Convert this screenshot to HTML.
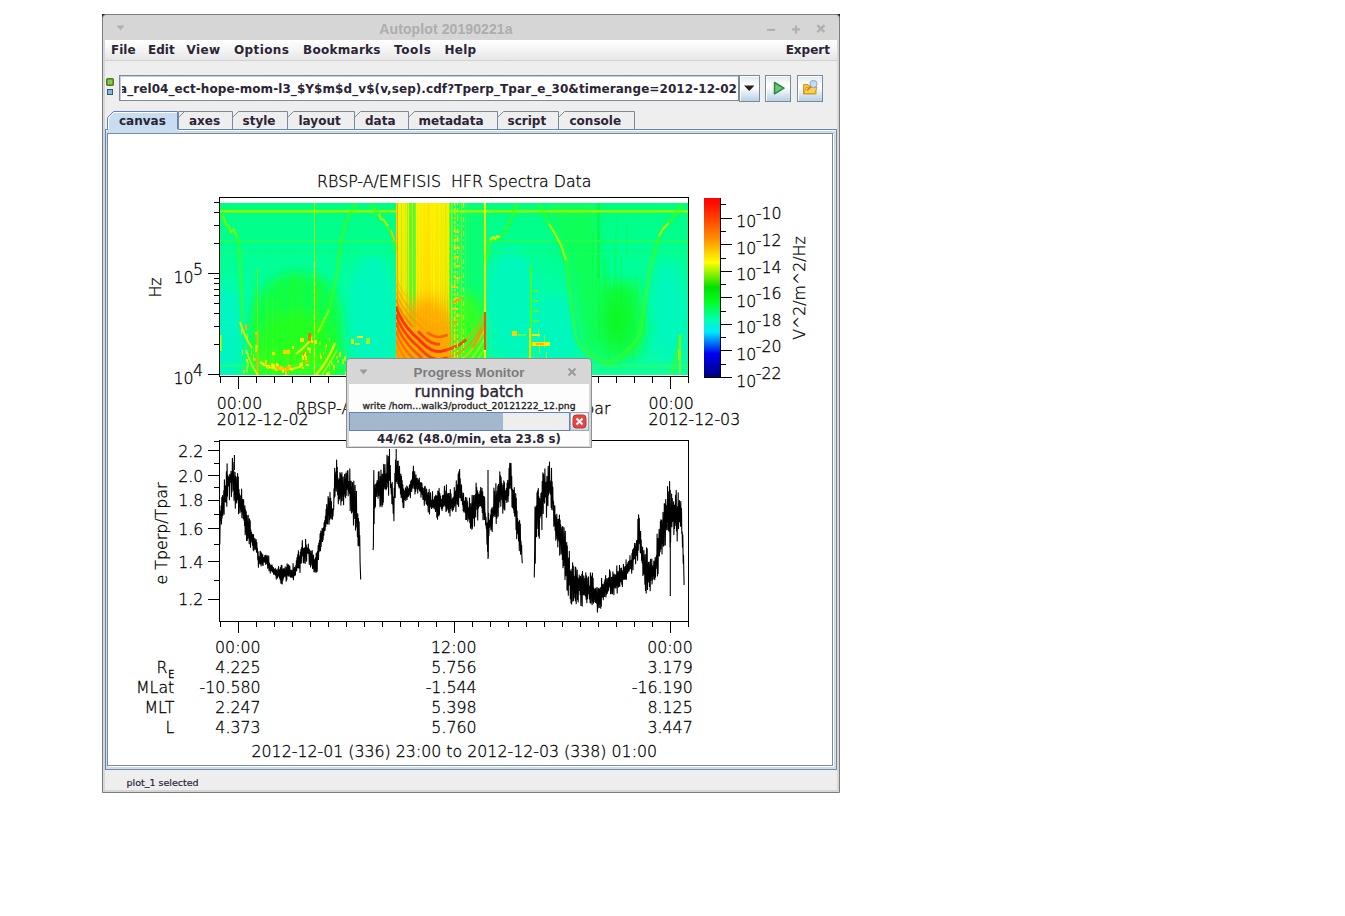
<!DOCTYPE html>
<html><head><meta charset="utf-8"><title>Autoplot 20190221a</title>
<style>
html,body{margin:0;padding:0;background:#fff;}
body{width:1345px;height:916px;position:relative;overflow:hidden;font-family:"DejaVu Sans","Liberation Sans",sans-serif;}
.abs{position:absolute;}
#win{position:absolute;left:102px;top:14px;width:736px;height:777px;border:1px solid #7c7c7c;background:#d6d6d6;border-radius:4px 4px 0 0;}
#title{position:absolute;left:0;top:0;width:736px;height:25px;}
#title .t{position:absolute;left:0;width:736px;top:6px;text-align:center;font:bold 14px "Liberation Sans",sans-serif;color:#b2b2b2;}
#menubar{position:absolute;left:2px;top:25px;width:732px;height:20px;background:linear-gradient(#ffffff 0%,#f4f4f4 50%,#e6e6e6 100%);border-bottom:1px solid #d0d0d0;}
#menubar span{position:absolute;top:3px;font:bold 12px "DejaVu Sans",sans-serif;color:#2b2436;white-space:pre;}
#panel{position:absolute;left:2px;top:46px;width:732px;height:729px;background:#eeeeee;}
.ui{font:bold 12px "DejaVu Sans",sans-serif;color:#333;}
#url{position:absolute;left:14px;top:14px;width:618px;height:24px;border:1px solid #7a8a99;background:#fff;box-shadow:inset 1px 1px 0 #b8cfe5;overflow:hidden;}
#url .clip{position:absolute;left:2px;right:0;top:0;bottom:0;overflow:hidden;}
#url span{position:absolute;right:1px;top:6px;letter-spacing:0.075px;white-space:pre;font:bold 12px "DejaVu Sans",sans-serif;color:#2b2436;}
.btn{position:absolute;top:14px;height:25px;border:1px solid #7a8a99;background:linear-gradient(#dde8f3 0%,#ffffff 35%,#ffffff 45%,#b8cfe5 100%);box-shadow:inset 1px 1px 0 #fff;}
#tabs{position:absolute;left:0;top:0;z-index:2;pointer-events:none;}
#tabs text{font:bold 12px "DejaVu Sans",sans-serif;fill:#2b2436;}
#content{position:absolute;left:105px;top:129px;width:730px;height:639px;border:1px solid #7a8a99;border-top-color:#6382bf;border-left-color:#6382bf;background:#c8ddf2;box-shadow:inset 0 1px 0 #fff;}
#canvas{position:absolute;left:1px;top:3px;width:724px;height:631px;border:1px solid #7a8a99;background:#fff;box-shadow:1px 1px 0 #fff;}
#plot text{stroke:#000;stroke-width:0.3px;}
#status{position:absolute;left:126.5px;top:777px;-webkit-text-stroke:0.2px #2b2436;font:9.5px "DejaVu Sans",sans-serif;color:#2b2436;white-space:pre;}
</style></head><body>
<div class="abs" style="left:102px;top:14px;width:738px;height:4px;background:#0b1d40"></div>
<div id="win">
 <div id="title">
  <svg class="abs" style="left:0;top:0" width="736" height="25">
   <path d="M13.5 10.5h8l-4 5z" fill="#b0b0b0"/>
   <rect x="664" y="13.8" width="8" height="2.2" fill="#b0b0b0"/>
   <path d="M689 14.4h8M693 10.4v8" stroke="#b0b0b0" stroke-width="2.2" fill="none"/>
   <path d="M714.4 10.2l7 7M721.4 10.2l-7 7" stroke="#b0b0b0" stroke-width="2.4" fill="none"/>
  </svg>
  <div class="t" style="left:275px;width:136px;letter-spacing:0.1px;color:#adadad">Autoplot 20190221a</div>
 </div>
 <div id="menubar">
  <span style="left:6px">File</span><span style="left:43px">Edit</span><span style="left:81.5px;letter-spacing:0.4px">View</span><span style="left:129px;letter-spacing:0.39px">Options</span><span style="left:198px;letter-spacing:0.28px">Bookmarks</span><span style="left:289px;letter-spacing:0.64px">Tools</span><span style="left:339.5px;letter-spacing:0.25px">Help</span><span style="right:7px">Expert</span>
 </div>
 <div id="panel">
  <svg class="abs" style="left:0;top:15px" width="14" height="24">
   <rect x="1.75" y="2.75" width="6.5" height="6.5" rx="1" fill="#8fc25a" stroke="#4c7d0c" stroke-width="1.5"/>
   <rect x="2.5" y="13.5" width="5" height="5" fill="#86b8d2" stroke="#2a5d7e" stroke-width="1"/>
  </svg>
  <div id="url"><div class="clip"><span>a_rel04_ect-hope-mom-l3_$Y$m$d_v$(v,sep).cdf?Tperp_Tpar_e_30&amp;timerange=2012-12-02</span></div></div>
  <div class="btn" style="left:634px;width:19px"><svg width="19" height="24"><path d="M4 9.5h10.5l-5.25 5.5z" fill="#222"/></svg></div>
  <div class="btn" style="left:660px;width:24px"><svg width="24" height="24"><path d="M8.5 6.5l9.5 5.7l-9.5 5.7z" fill="#6cc578" stroke="#2c8a3c" stroke-width="1.5" stroke-linejoin="round"/></svg></div>
  <div class="btn" style="left:692px;width:24px"><svg width="24" height="24"><path d="M5.5 8.5h4.5l1 1.5h7v8h-12.5z" fill="#f3c63c" stroke="#c99a22"/><path d="M8 11.5h8.5v5h-8.5z" fill="#fdf0b0"/><path d="M6 17.5l2-6h11l-2.5 6z" fill="#f7d354" stroke="#c99a22" stroke-width="0.8"/><circle cx="15.5" cy="8" r="3.6" fill="#c2dcf4" stroke="#8fa8c8"/><path d="M13 10.5l-4 4" stroke="#e07828" stroke-width="1.7"/></svg></div>
 </div>
</div>
<svg id="tabs" width="1345" height="140">
 <g fill="#eeeeee" stroke="#7a8a99" stroke-width="1">
  <path d="M178.5 129V111.5H232.5V129"/>
  <path d="M232.5 117.5l6-6H287.5V129"/>
  <path d="M287.5 117.5l6-6H354.5V129"/>
  <path d="M354.5 117.5l6-6H408.5V129"/>
  <path d="M408.5 117.5l6-6H497.5V129"/>
  <path d="M497.5 117.5l6-6H558.5V129"/>
  <path d="M558.5 117.5l6-6H634.5V129"/>
 </g>
 <g stroke="#7a8a99" fill="none"><path d="M178.5 117.5l6-6"/></g>
 <path d="M107.5 130V117.5l6-6H177.5V130z" fill="#c8ddf2" stroke="#6382bf"/>
 <path d="M108.5 129V118l5.5-5.5H177" fill="none" stroke="#fff"/>
 <rect x="108" y="129" width="70" height="2" fill="#c8ddf2"/>
 <text x="119" y="125">canvas</text><text x="189" y="125">axes</text><text x="242.5" y="125">style</text><text x="298.5" y="125">layout</text><text x="365" y="125">data</text><text x="418.5" y="125">metadata</text><text x="507.5" y="125">script</text><text x="569.5" y="125">console</text>
</svg>
<div id="content"><div id="canvas">
<svg id="plot" class="abs" style="left:0;top:0" width="724" height="631" viewBox="108 134 724 631">
<defs>
<linearGradient id="bg" x1="0" y1="0" x2="0" y2="1"><stop offset="0" stop-color="#00ff7c"/><stop offset="0.12" stop-color="#00ff8a"/><stop offset="0.3" stop-color="#00ff94"/><stop offset="0.5" stop-color="#00ffa2"/><stop offset="0.8" stop-color="#00fab6"/><stop offset="1" stop-color="#10ff98"/></linearGradient>
<linearGradient id="cb" x1="0" y1="0" x2="0" y2="1"><stop offset="0" stop-color="#ff0000"/><stop offset="0.04" stop-color="#ff1000"/><stop offset="0.22" stop-color="#ff8800"/><stop offset="0.36" stop-color="#ffff00"/><stop offset="0.50" stop-color="#00e000"/><stop offset="0.58" stop-color="#00ff20"/><stop offset="0.68" stop-color="#00ffb0"/><stop offset="0.75" stop-color="#00e8ff"/><stop offset="0.87" stop-color="#0000f0"/><stop offset="1" stop-color="#000080"/></linearGradient>
<linearGradient id="yo" x1="0" y1="0" x2="0" y2="1"><stop offset="0" stop-color="#ffee00"/><stop offset="0.45" stop-color="#ffe000"/><stop offset="0.75" stop-color="#ffc000"/><stop offset="1" stop-color="#ffa000"/></linearGradient>
<linearGradient id="og" x1="0" y1="0" x2="0" y2="1"><stop offset="0" stop-color="#ffb400" stop-opacity="0"/><stop offset="0.5" stop-color="#ffb000" stop-opacity="0.6"/><stop offset="1" stop-color="#ffa000" stop-opacity="0.85"/></linearGradient>
<linearGradient id="yg" x1="0" y1="0" x2="0" y2="1"><stop offset="0" stop-color="#c0ff00"/><stop offset="0.6" stop-color="#e0ff00"/><stop offset="1" stop-color="#ffd000"/></linearGradient>
<filter id="b6" x="-30%" y="-30%" width="160%" height="160%"><feGaussianBlur stdDeviation="6"/></filter>
<filter id="b3" x="-30%" y="-30%" width="160%" height="160%"><feGaussianBlur stdDeviation="3"/></filter>
<filter id="b1" x="-30%" y="-30%" width="160%" height="160%"><feGaussianBlur stdDeviation="0.8"/></filter>
<clipPath id="sp"><rect x="220" y="203" width="468" height="172"/></clipPath>
<clipPath id="blk"><rect x="396" y="203" width="90" height="172"/></clipPath>
</defs>
<g font-family="DejaVu Sans Light,DejaVu Sans,sans-serif" font-size="15.8" fill="#000">
<g clip-path="url(#sp)">
<rect x="220" y="203" width="468" height="172" fill="url(#bg)"/>
<g filter="url(#b6)">
<ellipse cx="226" cy="335" rx="18" ry="50" fill="#00f6c0"/>
<ellipse cx="372" cy="315" rx="24" ry="60" fill="#00f8bc"/>
<ellipse cx="512" cy="305" rx="26" ry="55" fill="#00f8bc"/>
<ellipse cx="555" cy="335" rx="22" ry="40" fill="#00f8bc"/>
<ellipse cx="668" cy="310" rx="16" ry="50" fill="#00f8bc"/>
<path d="M242 380L246 335C252 295 268 275 292 272C318 272 338 280 344 315L348 380z" fill="#10ff48"/>
<path d="M250 380L256 345C262 322 276 314 294 312C312 312 328 318 334 338L338 380z" fill="#24ff24"/>
<ellipse cx="290" cy="362" rx="34" ry="12" fill="#3cff14"/>
<path d="M596 203L603 280H640L650 330L640 356L610 364L584 350L576 320L572 280L560 240L545 203z" fill="#08ff58"/>
<ellipse cx="619" cy="318" rx="17" ry="34" fill="#0cf81c" opacity="0.6"/>
<ellipse cx="617" cy="320" rx="8" ry="16" fill="#08f408" opacity="0.4"/>
<ellipse cx="470" cy="335" rx="16" ry="40" fill="#20ff30"/>
</g>
<rect x="276" y="277" width="1" height="98" fill="#30ff10" opacity="0.33"/>
<rect x="296" y="294" width="1" height="81" fill="#30ff10" opacity="0.66"/>
<rect x="266" y="272" width="1" height="103" fill="#10ff40" opacity="0.33"/>
<rect x="255" y="299" width="1" height="76" fill="#28ff18" opacity="0.35"/>
<rect x="267" y="315" width="1" height="60" fill="#30ff10" opacity="0.53"/>
<rect x="283" y="343" width="1" height="32" fill="#30ff10" opacity="0.52"/>
<rect x="259" y="299" width="1" height="76" fill="#28ff18" opacity="0.35"/>
<rect x="275" y="330" width="1" height="45" fill="#20ff20" opacity="0.34"/>
<rect x="300" y="280" width="1" height="95" fill="#30ff10" opacity="0.52"/>
<rect x="252" y="270" width="1" height="105" fill="#20ff20" opacity="0.50"/>
<rect x="296" y="327" width="1" height="48" fill="#10ff40" opacity="0.53"/>
<rect x="289" y="289" width="1" height="86" fill="#20ff20" opacity="0.58"/>
<rect x="269" y="311" width="1" height="64" fill="#28ff18" opacity="0.50"/>
<rect x="278" y="301" width="1" height="74" fill="#28ff18" opacity="0.69"/>
<rect x="257" y="298" width="1" height="77" fill="#50ff10" opacity="0.36"/>
<rect x="292" y="268" width="1" height="107" fill="#30ff10" opacity="0.61"/>
<rect x="300" y="335" width="1" height="40" fill="#50ff10" opacity="0.44"/>
<rect x="279" y="305" width="1" height="70" fill="#10ff40" opacity="0.33"/>
<rect x="255" y="287" width="1" height="88" fill="#30ff10" opacity="0.32"/>
<rect x="312" y="317" width="1" height="58" fill="#10ff40" opacity="0.41"/>
<rect x="282" y="318" width="1" height="57" fill="#30ff10" opacity="0.68"/>
<rect x="279" y="314" width="1" height="61" fill="#10ff40" opacity="0.32"/>
<rect x="318" y="275" width="1" height="100" fill="#20ff20" opacity="0.46"/>
<rect x="332" y="305" width="1" height="70" fill="#20ff20" opacity="0.48"/>
<rect x="298" y="336" width="1" height="39" fill="#10ff40" opacity="0.65"/>
<rect x="272" y="298" width="1" height="77" fill="#50ff10" opacity="0.57"/>
<rect x="282" y="283" width="1" height="92" fill="#30ff10" opacity="0.37"/>
<rect x="268" y="284" width="1" height="91" fill="#10ff40" opacity="0.63"/>
<rect x="263" y="288" width="1" height="87" fill="#20ff20" opacity="0.47"/>
<rect x="281" y="310" width="1" height="65" fill="#20ff20" opacity="0.58"/>
<rect x="294" y="314" width="1" height="61" fill="#30ff10" opacity="0.48"/>
<rect x="328" y="341" width="1" height="34" fill="#28ff18" opacity="0.46"/>
<rect x="284" y="273" width="1" height="102" fill="#10ff40" opacity="0.32"/>
<rect x="252" y="282" width="1" height="93" fill="#20ff20" opacity="0.34"/>
<rect x="302" y="273" width="1" height="102" fill="#28ff18" opacity="0.36"/>
<rect x="256" y="294" width="1" height="81" fill="#30ff10" opacity="0.33"/>
<rect x="266" y="295" width="1" height="80" fill="#50ff10" opacity="0.68"/>
<rect x="303" y="303" width="1" height="72" fill="#30ff10" opacity="0.64"/>
<rect x="339" y="302" width="1" height="73" fill="#10ff40" opacity="0.42"/>
<rect x="260" y="325" width="1" height="50" fill="#50ff10" opacity="0.49"/>
<rect x="311" y="306" width="1" height="69" fill="#20ff20" opacity="0.68"/>
<rect x="296" y="277" width="1" height="98" fill="#28ff18" opacity="0.67"/>
<rect x="317" y="289" width="1" height="86" fill="#30ff10" opacity="0.58"/>
<rect x="271" y="294" width="1" height="81" fill="#20ff20" opacity="0.44"/>
<rect x="267" y="308" width="1" height="67" fill="#28ff18" opacity="0.43"/>
<rect x="267" y="330" width="1" height="45" fill="#20ff20" opacity="0.62"/>
<rect x="323" y="324" width="1" height="51" fill="#20ff20" opacity="0.38"/>
<rect x="292" y="323" width="1" height="52" fill="#30ff10" opacity="0.62"/>
<rect x="290" y="280" width="1" height="95" fill="#28ff18" opacity="0.68"/>
<rect x="288" y="340" width="1" height="35" fill="#50ff10" opacity="0.68"/>
<rect x="280" y="283" width="1" height="92" fill="#20ff20" opacity="0.49"/>
<rect x="278" y="304" width="1" height="71" fill="#28ff18" opacity="0.64"/>
<rect x="291" y="317" width="1" height="58" fill="#30ff10" opacity="0.63"/>
<rect x="257" y="296" width="1" height="79" fill="#20ff20" opacity="0.49"/>
<rect x="263" y="328" width="1" height="47" fill="#50ff10" opacity="0.33"/>
<rect x="335" y="323" width="1" height="52" fill="#10ff40" opacity="0.46"/>
<rect x="335" y="323" width="1" height="52" fill="#20ff20" opacity="0.70"/>
<rect x="249" y="312" width="1" height="63" fill="#10ff40" opacity="0.62"/>
<rect x="260" y="331" width="1" height="44" fill="#10ff40" opacity="0.56"/>
<rect x="279" y="309" width="1" height="66" fill="#20ff20" opacity="0.31"/>
<rect x="636" y="277" width="1" height="36" fill="#10f828" opacity="0.44"/>
<rect x="598" y="299" width="1" height="42" fill="#10f828" opacity="0.47"/>
<rect x="592" y="233" width="1" height="60" fill="#10f828" opacity="0.44"/>
<rect x="609" y="261" width="1" height="80" fill="#10f828" opacity="0.27"/>
<rect x="633" y="291" width="1" height="70" fill="#10f828" opacity="0.45"/>
<rect x="620" y="285" width="1" height="83" fill="#10f828" opacity="0.28"/>
<rect x="599" y="258" width="1" height="82" fill="#10f828" opacity="0.44"/>
<rect x="625" y="281" width="1" height="39" fill="#10f828" opacity="0.29"/>
<rect x="626" y="225" width="1" height="34" fill="#10f828" opacity="0.42"/>
<rect x="621" y="256" width="1" height="77" fill="#10f828" opacity="0.47"/>
<rect x="593" y="231" width="1" height="33" fill="#10f828" opacity="0.27"/>
<rect x="616" y="217" width="1" height="84" fill="#10f828" opacity="0.27"/>
<rect x="609" y="298" width="1" height="66" fill="#10f828" opacity="0.30"/>
<rect x="606" y="258" width="1" height="78" fill="#10f828" opacity="0.38"/>
<rect x="604" y="259" width="1" height="83" fill="#10f828" opacity="0.48"/>
<rect x="644" y="291" width="1" height="42" fill="#10f828" opacity="0.36"/>
<rect x="614" y="248" width="1" height="49" fill="#10f828" opacity="0.42"/>
<rect x="615" y="233" width="1" height="48" fill="#10f828" opacity="0.28"/>
<rect x="597" y="203" width="3" height="76" fill="#10f030" opacity="0.55"/>
<rect x="220" y="210" width="468" height="2.6" fill="#8cff00"/>
<rect x="220" y="240" width="468" height="2" fill="#28ff48" opacity="0.75"/>
<rect x="220" y="253" width="468" height="1.5" fill="#20ff60" opacity="0.45"/>
<rect x="220" y="364" width="468" height="3" fill="#30ff60" opacity="0.45"/>
<rect x="220" y="370" width="468" height="1" fill="#30ff60" opacity="0.4"/>
<g clip-path="url(#blk)">
<rect x="396" y="203" width="54" height="172" fill="url(#yo)"/>
<rect x="450" y="203" width="36" height="172" fill="#08ff74"/>
<rect x="450" y="210" width="36" height="2.6" fill="#8cff00"/>
<ellipse cx="468" cy="345" rx="20" ry="52" fill="#30ff28" filter="url(#b6)"/>
<rect x="451" y="203" width="1" height="172" fill="#c0ff10" opacity="0.8"/>
<rect x="452" y="203" width="1" height="172" fill="#60ff30" opacity="0.7"/>
<rect x="455" y="203" width="1" height="172" fill="#80ff20" opacity="0.6"/>
<rect x="459" y="203" width="1" height="172" fill="#50ff30" opacity="0.6"/>
<rect x="461" y="203" width="1" height="172" fill="#a0ff18" opacity="0.7"/>
<rect x="465" y="203" width="1" height="172" fill="#60ff30" opacity="0.5"/>
<rect x="468" y="203" width="1" height="172" fill="#40ff30" opacity="0.4"/>
<rect x="396" y="203" width="1" height="172" fill="#ffd000" opacity="0.85"/>
<rect x="397" y="203" width="1" height="172" fill="#ff9800" opacity="0.85"/>
<rect x="399" y="203" width="1" height="172" fill="#d8ff00" opacity="0.85"/>
<rect x="401" y="203" width="1" height="172" fill="#90ff18" opacity="0.85"/>
<rect x="403" y="203" width="2" height="172" fill="#ffe800" opacity="0.85"/>
<rect x="405" y="203" width="1" height="172" fill="#b0ff10" opacity="0.85"/>
<rect x="407" y="203" width="1" height="172" fill="#70ff20" opacity="0.85"/>
<rect x="408" y="203" width="1" height="172" fill="#ffe000" opacity="0.85"/>
<rect x="409" y="203" width="1" height="172" fill="#50ff28" opacity="0.85"/>
<rect x="410" y="203" width="2" height="172" fill="#38ff38" opacity="0.85"/>
<rect x="412" y="203" width="1" height="172" fill="#b0ff08" opacity="0.85"/>
<rect x="413" y="203" width="2" height="172" fill="#30ff40" opacity="0.85"/>
<rect x="415" y="203" width="1" height="172" fill="#60ff20" opacity="0.85"/>
<rect x="416" y="203" width="1" height="172" fill="#ffee00" opacity="0.85"/>
<rect x="419" y="203" width="1" height="172" fill="#e8ff00" opacity="0.85"/>
<rect x="422" y="203" width="1" height="172" fill="#fff200" opacity="0.85"/>
<rect x="424" y="203" width="1" height="172" fill="#ffe400" opacity="0.85"/>
<rect x="428" y="203" width="1" height="172" fill="#ffd800" opacity="0.85"/>
<rect x="431" y="203" width="1" height="172" fill="#fff000" opacity="0.85"/>
<rect x="433" y="203" width="2" height="172" fill="#fff400" opacity="0.85"/>
<rect x="437" y="203" width="1" height="172" fill="#ffe600" opacity="0.85"/>
<rect x="439" y="203" width="1" height="172" fill="#e8ff00" opacity="0.85"/>
<rect x="441" y="203" width="1" height="172" fill="#c8ff00" opacity="0.85"/>
<rect x="443" y="203" width="1" height="172" fill="#ffe800" opacity="0.85"/>
<rect x="445" y="203" width="1" height="172" fill="#a8ff10" opacity="0.85"/>
<rect x="446" y="203" width="1" height="172" fill="#ffe000" opacity="0.85"/>
<rect x="448" y="203" width="1" height="172" fill="#e0ff00" opacity="0.85"/>
<rect x="449" y="203" width="1" height="172" fill="#60ff20" opacity="0.85"/>
<rect x="396" y="285" width="54" height="90" fill="url(#og)"/>
<ellipse cx="426" cy="350" rx="30" ry="50" fill="#ff9c00" opacity="0.6" filter="url(#b6)"/>
<path d="M396 277.0 L399 285.0 L403 292.0 L408 299.0 L413 304.5 L418 309.0 L423 314.0 L427 317.5 L431 320.0 L436 321.7 L440 322.0" fill="none" stroke="#ffb800" stroke-width="1.6" opacity="0.5" stroke-linejoin="round"/>
<path d="M396 284.5 L399 292.5 L403 299.5 L408 306.5 L413 312.0 L418 316.5 L423 321.5 L427 325.0 L431 327.5 L436 329.2 L440 329.5 L447.6 327.5" fill="none" stroke="#ffa000" stroke-width="2" opacity="0.6" stroke-linejoin="round"/>
<path d="M427 332.5 L431 335.0 L436 336.7 L440 337.0 L447.6 335.0" fill="none" stroke="#ff5000" stroke-width="2.6" opacity="0.85" stroke-linejoin="round"/>
<path d="M396 292.0 L399 300.0 L403 307.0 L408 314.0 L413 319.5 L418 324.0 L423 329.0" fill="none" stroke="#ff9000" stroke-width="2" opacity="0.6" stroke-linejoin="round"/>
<path d="M418 331.3 L423 336.3 L427 339.8 L431 342.3 L436 344.0 L440 344.3" fill="none" stroke="#ff3800" stroke-width="2.8" opacity="0.9" stroke-linejoin="round"/>
<path d="M396 299.3 L399 307.3 L403 314.3 L408 321.3 L413 326.8" fill="none" stroke="#ff7000" stroke-width="2" opacity="0.7" stroke-linejoin="round"/>
<path d="M396 306.6 L399 314.6 L403 321.6 L408 328.6 L413 334.1 L418 338.6 L423 343.6 L427 347.1 L431 349.6 L436 351.3 L440 351.6 L447.6 349.6" fill="none" stroke="#ff2c00" stroke-width="3" opacity="0.95" stroke-linejoin="round"/>
<path d="M396 314.5 L399 322.5 L403 329.5 L408 336.5 L413 342.0 L418 346.5 L423 351.5 L427 355.0 L431 357.5 L436 359.2 L440 359.5 L447.6 357.5" fill="none" stroke="#ff3400" stroke-width="2.8" opacity="0.9" stroke-linejoin="round"/>
<path d="M396 322.5 L399 330.5 L403 337.5 L408 344.5 L413 350.0 L418 354.5 L423 359.5 L427 363.0 L431 365.5 L436 367.2 L440 367.5 L447.6 365.5" fill="none" stroke="#ff4800" stroke-width="2.6" opacity="0.85" stroke-linejoin="round"/>
<path d="M396 331.0 L399 339.0 L403 346.0 L408 353.0 L413 358.5 L418 363.0 L423 368.0 L427 371.5 L431 374.0 L436 375.7 L440 376.0 L447.6 374.0" fill="none" stroke="#ff6000" stroke-width="2.4" opacity="0.8" stroke-linejoin="round"/>
<path d="M396 340.0 L399 348.0 L403 355.0 L408 362.0 L413 367.5 L418 372.0 L423 377.0 L427 380.5 L431 383.0 L436 384.7 L440 385.0 L447.6 383.0" fill="none" stroke="#ff7800" stroke-width="2.2" opacity="0.7" stroke-linejoin="round"/>
<path d="M396 349.0 L399 357.0 L403 364.0 L408 371.0 L413 376.5 L418 381.0 L423 386.0 L427 389.5 L431 392.0 L436 393.7 L440 394.0 L447.6 392.0" fill="none" stroke="#ff8800" stroke-width="2" opacity="0.6" stroke-linejoin="round"/>
<path d="M396 358.0 L399 366.0 L403 373.0 L408 380.0 L413 385.5 L418 390.0 L423 395.0 L427 398.5 L431 401.0 L436 402.7 L440 403.0 L447.6 401.0" fill="none" stroke="#ff9000" stroke-width="2" opacity="0.5" stroke-linejoin="round"/>
<path d="M396 367.0 L399 375.0 L403 382.0 L408 389.0 L413 394.5 L418 399.0 L423 404.0 L427 407.5 L431 410.0 L436 411.7 L440 412.0 L447.6 410.0" fill="none" stroke="#ff9800" stroke-width="2" opacity="0.5" stroke-linejoin="round"/>
<path d="M447.6 349.6 L453 347.6 L459 345.1 L466.4 339.6" fill="none" stroke="#ff3800" stroke-width="2.8" opacity="0.9" stroke-linejoin="round"/>
<path d="M466.4 339.6 L472 333.6 L478 325.6 L484 315.6 L486 311.6" fill="none" stroke="#ffa000" stroke-width="2" opacity="0.6" stroke-linejoin="round"/>
<path d="M447.6 357.5 L453 355.5 L459 353.0 L466.4 347.5 L472 341.5 L478 333.5 L484 323.5 L486 319.5" fill="none" stroke="#ff9000" stroke-width="2" opacity="0.7" stroke-linejoin="round"/>
<path d="M447.6 365.5 L453 363.5 L459 361.0 L466.4 355.5 L472 349.5 L478 341.5 L484 331.5 L486 327.5" fill="none" stroke="#ffc800" stroke-width="2" opacity="0.7" stroke-linejoin="round"/>
<path d="M447.6 374.0 L453 372.0 L459 369.5 L466.4 364.0 L472 358.0 L478 350.0 L484 340.0 L486 336.0" fill="none" stroke="#e8ff00" stroke-width="1.6" opacity="0.6" stroke-linejoin="round"/>
<path d="M447.6 383.0 L453 381.0 L459 378.5 L466.4 373.0 L472 367.0 L478 359.0 L484 349.0 L486 345.0" fill="none" stroke="#d0ff00" stroke-width="1.6" opacity="0.5" stroke-linejoin="round"/>
<path d="M473 348l4-8l3-6l2-6" stroke="#ff9000" stroke-width="3" fill="none" opacity="0.8"/>
<path d="M454.5 203V375" stroke="#e0ff00" stroke-width="1.2" stroke-dasharray="3 2 6 3 2 2" opacity="0.9"/>
<path d="M457.5 203V375" stroke="#e0ff00" stroke-width="1.2" stroke-dasharray="2 3 4 2 7 3" opacity="0.9"/>
<path d="M463.5 203V375" stroke="#e0ff00" stroke-width="1.2" stroke-dasharray="5 3 2 4" opacity="0.9"/>
<path d="M455 232h4M455 240h4M455 248h5M454 257h5M456 266h4M455 278h5M452 287h6M455 298h4M452 309h5M456 316h4" stroke="#ffc800" stroke-width="2.2"/>
<path d="M452 303l10-5M453 322h5" stroke="#ffa000" stroke-width="2"/>
<rect x="484" y="203" width="2" height="172" fill="#f0ff00"/>
<rect x="484" y="312" width="2" height="38" fill="#ff5000"/>
</g>
<path d="M314.5 203V375" stroke="#b0ff00" stroke-width="1"/>
<path d="M314.5 262V375" stroke="#ffe000" stroke-width="1.2" stroke-dasharray="6 2 9 3 4 2"/>
<path d="M257.5 268V375" stroke="#70ff10" stroke-width="1"/>
<path d="M257.5 333V375" stroke="#ffb000" stroke-width="1.8"/>
<g fill="none" stroke="#3cff1c" stroke-width="2.6" opacity="0.85" filter="url(#b1)" stroke-linejoin="round">
<path d="M221 212C224 222 228 228 231 232C234 230 236 236 238 240C241 262 241 292 243 322"/>
<path d="M240 322C246 340 254 356 266 365C280 372 296 369 306 354C312 345 318 336 324 322C331 305 337 280 340 250C342 232 346 220 352 210L357 201"/>
<path d="M370 201L376 212C382 218 388 226 392 236L396 250"/>
<path d="M486.5 262C488 246 490 240 494 238L501 237C506 232 510 222 516 207L518 201"/>
<path d="M538 203C546 218 554 230 560 241C564 250 566 258 568 270C570 290 572 316 577 340C584 352 596 360 609 362.6C618 360 628 352 639 336C643 320 645 300 648 280C651 262 656 244 663 228C668 222 672 221 674 216L682 204"/>
<path d="M672 375C675 362 678 348 681 334"/>
<path d="M420 320l0 0"/>
</g>
<path d="M223 216l3 8l3 2l2 6l3 -3l3 8" fill="none" stroke="#80ff10" stroke-width="2" opacity="0.8" stroke-linejoin="round"/>
<path d="M240 322C243 332 248 342 252 348" fill="none" stroke="#ffe000" stroke-width="1.8" opacity="0.9" stroke-linejoin="round"/>
<path d="M260 362C272 371 290 371 302 366" fill="none" stroke="#ffe800" stroke-width="2.2" opacity="0.9" stroke-linejoin="round"/>
<path d="M296 354l6-5l6-6l4-6" fill="none" stroke="#ffe800" stroke-width="2.2" opacity="0.9" stroke-linejoin="round"/>
<path d="M318 332l6-12l5-10" fill="none" stroke="#c8ff00" stroke-width="1.6" opacity="0.8" stroke-linejoin="round"/>
<path d="M246 350C250 362 254 370 258 375" fill="none" stroke="#e0ff00" stroke-width="1.8" opacity="0.85" stroke-linejoin="round"/>
<path d="M316 375C324 366 331 353 335 343" fill="none" stroke="#f0f000" stroke-width="2.4" opacity="0.9" stroke-linejoin="round"/>
<path d="M322 375C328 366 333 358 337 350" fill="none" stroke="#d0ff00" stroke-width="1.6" opacity="0.8" stroke-linejoin="round"/>
<path d="M379 214l2 5l3 1l4 6" fill="none" stroke="#b8ff10" stroke-width="2.2" opacity="0.85" stroke-linejoin="round"/>
<path d="M391 230l2 6l1.5 5" fill="none" stroke="#ffc000" stroke-width="1.6" opacity="0.9" stroke-linejoin="round"/>
<path d="M490 240l3-3l2 2l2-3l3 1" fill="none" stroke="#e0ff00" stroke-width="2.2" opacity="0.9" stroke-linejoin="round"/>
<path d="M549 224C554 232 559 240 562 248L566 260" fill="none" stroke="#c8ff10" stroke-width="1.8" opacity="0.9" stroke-linejoin="round"/>
<path d="M659 236C662 230 665 226 669 223" fill="none" stroke="#c0ff10" stroke-width="2" opacity="0.9" stroke-linejoin="round"/>
<path d="M574 300C578 330 588 352 606 366C624 368 640 350 644 330" fill="none" stroke="#30ff30" stroke-width="1.4" opacity="0.45" stroke-linejoin="round"/>
<rect x="283" y="368" width="2" height="4" fill="#ffb000"/>
<rect x="301" y="362" width="2" height="4" fill="#f0ff00"/>
<rect x="290" y="365" width="2" height="2" fill="#ffb000"/>
<rect x="266" y="365" width="3" height="3" fill="#ffe800"/>
<rect x="306" y="364" width="3" height="2" fill="#f0ff00"/>
<rect x="291" y="369" width="2" height="2" fill="#ffe800"/>
<rect x="271" y="363" width="2" height="3" fill="#ffe800"/>
<rect x="282" y="369" width="2" height="4" fill="#f0ff00"/>
<rect x="276" y="363" width="2" height="4" fill="#ffe800"/>
<rect x="275" y="368" width="3" height="3" fill="#ffe800"/>
<rect x="277" y="364" width="2" height="2" fill="#e8ff00"/>
<rect x="288" y="365" width="2" height="3" fill="#ffe800"/>
<rect x="265" y="360" width="2" height="2" fill="#ffe800"/>
<rect x="305" y="360" width="3" height="3" fill="#ffb000"/>
<rect x="281" y="367" width="3" height="3" fill="#ffd000"/>
<rect x="277" y="365" width="2" height="2" fill="#ffe800"/>
<rect x="268" y="365" width="2" height="3" fill="#ffe800"/>
<rect x="299" y="363" width="2" height="3" fill="#f0ff00"/>
<rect x="285" y="371" width="2" height="4" fill="#ffd000"/>
<rect x="280" y="366" width="2" height="3" fill="#ffd000"/>
<rect x="302" y="367" width="2" height="2" fill="#f0ff00"/>
<rect x="272" y="364" width="3" height="4" fill="#f0ff00"/>
<rect x="267" y="366" width="2" height="3" fill="#ffd000"/>
<rect x="262" y="363" width="2" height="2" fill="#e8ff00"/>
<rect x="265" y="361" width="2" height="4" fill="#ffd000"/>
<rect x="279" y="367" width="3" height="3" fill="#ffd000"/>
<rect x="329" y="361" width="1" height="8" fill="#c8ff00" opacity="0.9"/>
<rect x="325" y="345" width="1" height="8" fill="#a8ff10" opacity="0.9"/>
<rect x="345" y="371" width="1" height="5" fill="#a8ff10" opacity="0.9"/>
<rect x="319" y="342" width="2" height="3" fill="#a8ff10" opacity="0.9"/>
<rect x="339" y="352" width="2" height="5" fill="#ffd000" opacity="0.9"/>
<rect x="326" y="344" width="1" height="3" fill="#ffe800" opacity="0.9"/>
<rect x="331" y="362" width="2" height="3" fill="#a8ff10" opacity="0.9"/>
<rect x="326" y="372" width="2" height="3" fill="#e8ff00" opacity="0.9"/>
<rect x="320" y="353" width="1" height="3" fill="#e8ff00" opacity="0.9"/>
<rect x="323" y="352" width="1" height="3" fill="#a8ff10" opacity="0.9"/>
<rect x="328" y="371" width="2" height="8" fill="#c8ff00" opacity="0.9"/>
<rect x="337" y="360" width="2" height="3" fill="#e8ff00" opacity="0.9"/>
<rect x="344" y="356" width="2" height="5" fill="#c8ff00" opacity="0.9"/>
<rect x="336" y="356" width="2" height="3" fill="#c8ff00" opacity="0.9"/>
<rect x="333" y="365" width="2" height="5" fill="#e8ff00" opacity="0.9"/>
<rect x="320" y="356" width="2" height="3" fill="#ffe800" opacity="0.9"/>
<rect x="342" y="359" width="2" height="5" fill="#a8ff10" opacity="0.9"/>
<rect x="329" y="338" width="1" height="3" fill="#ffe800" opacity="0.9"/>
<rect x="336" y="375" width="2" height="5" fill="#ffd000" opacity="0.9"/>
<rect x="247" y="362" width="2" height="5" fill="#a8ff10" opacity="0.85"/>
<rect x="248" y="353" width="1" height="5" fill="#a8ff10" opacity="0.85"/>
<rect x="251" y="350" width="1" height="5" fill="#e8ff00" opacity="0.85"/>
<rect x="254" y="358" width="2" height="3" fill="#ffc000" opacity="0.85"/>
<rect x="247" y="333" width="1" height="7" fill="#a8ff10" opacity="0.85"/>
<rect x="243" y="370" width="2" height="3" fill="#ffc000" opacity="0.85"/>
<rect x="246" y="359" width="2" height="3" fill="#e8ff00" opacity="0.85"/>
<rect x="256" y="345" width="2" height="3" fill="#a8ff10" opacity="0.85"/>
<rect x="242" y="350" width="1" height="5" fill="#ffe800" opacity="0.85"/>
<rect x="255" y="332" width="2" height="3" fill="#ffc000" opacity="0.85"/>
<rect x="255" y="345" width="2" height="7" fill="#a8ff10" opacity="0.85"/>
<rect x="246" y="367" width="2" height="5" fill="#a8ff10" opacity="0.85"/>
<rect x="241" y="328" width="1" height="7" fill="#a8ff10" opacity="0.85"/>
<rect x="253" y="354" width="1" height="7" fill="#c8ff00" opacity="0.85"/>
<rect x="302" y="357" width="2" height="3" fill="#ffe800"/>
<rect x="304" y="352" width="2" height="4" fill="#ffe800"/>
<rect x="302" y="355" width="2" height="2" fill="#e8ff00"/>
<rect x="311" y="341" width="2" height="3" fill="#ff9000"/>
<rect x="303" y="352" width="2" height="4" fill="#ff9000"/>
<rect x="311" y="340" width="2" height="3" fill="#e8ff00"/>
<rect x="309" y="350" width="2" height="3" fill="#ffd000"/>
<rect x="314" y="340" width="2" height="2" fill="#ffd000"/>
<rect x="307" y="353" width="2" height="2" fill="#ff9000"/>
<rect x="307" y="347" width="2" height="3" fill="#ffe800"/>
<rect x="309" y="348" width="2" height="3" fill="#e8ff00"/>
<rect x="305" y="356" width="2" height="4" fill="#ffe800"/>
<rect x="314" y="341" width="2" height="2" fill="#ffe800"/>
<rect x="304" y="354" width="2" height="3" fill="#ffe800"/>
<rect x="309" y="349" width="2" height="3" fill="#e8ff00"/>
<rect x="315" y="340" width="2" height="4" fill="#e8ff00"/>
<rect x="530" y="349" width="1" height="8" fill="#e0ff00" opacity="0.8"/>
<rect x="538" y="329" width="1" height="8" fill="#c8ff00" opacity="0.8"/>
<rect x="544" y="336" width="1" height="12" fill="#70ff20" opacity="0.8"/>
<rect x="544" y="335" width="1" height="12" fill="#a0ff10" opacity="0.8"/>
<rect x="546" y="352" width="1" height="8" fill="#e0ff00" opacity="0.8"/>
<rect x="540" y="360" width="1" height="8" fill="#a0ff10" opacity="0.8"/>
<rect x="539" y="342" width="1" height="12" fill="#a0ff10" opacity="0.8"/>
<rect x="538" y="371" width="1" height="8" fill="#70ff20" opacity="0.8"/>
<rect x="541" y="373" width="1" height="8" fill="#a0ff10" opacity="0.8"/>
<rect x="545" y="374" width="1" height="12" fill="#70ff20" opacity="0.8"/>
<rect x="357" y="336" width="6" height="2" fill="#ffe000"/>
<rect x="355" y="343" width="5" height="2" fill="#e0ff00"/>
<rect x="351" y="339" width="3" height="5" fill="#d0ff00"/>
<rect x="366" y="338" width="4" height="6" fill="#a0ff20"/>
<rect x="512" y="331" width="5" height="5" fill="#ffd000"/>
<rect x="518" y="334" width="8" height="2" fill="#60ff40"/>
<rect x="530" y="334" width="10" height="2" fill="#d8ff10"/>
<rect x="532" y="342" width="18" height="4" fill="#ffe400"/>
<rect x="536" y="343" width="8" height="2" fill="#ffb000"/>
<rect x="530" y="265" width="2" height="110" fill="#40ff28"/>
<rect x="533" y="290" width="5" height="2" fill="#50ff30"/>
<rect x="533" y="300" width="6" height="2" fill="#50ff30"/>
<rect x="533" y="310" width="6" height="2" fill="#50ff30"/>
<rect x="533" y="320" width="6" height="2" fill="#50ff30"/>
<rect x="529" y="328" width="2" height="30" fill="#e8ff00"/>
<rect x="300" y="338" width="4" height="4" fill="#ffe000"/>
<rect x="308" y="333" width="3" height="8" fill="#ff7000"/>
<rect x="283" y="350" width="7" height="4" fill="#ffd000"/>
<rect x="276" y="366" width="4" height="4" fill="#ffc000"/>
<rect x="286" y="366" width="3" height="5" fill="#ffb000"/>
<rect x="272" y="352" width="3" height="3" fill="#ffe000"/>
<rect x="292" y="346" width="2" height="3" fill="#ffe000"/>
<rect x="220" y="335" width="1.5" height="16" fill="#b8ff00"/>
<rect x="678" y="350" width="3" height="10" fill="#c0ff10"/>
<rect x="679" y="335" width="2" height="38" fill="#70ff20"/>
<rect x="245" y="324" width="2" height="6" fill="#ffb000"/>
</g>
<g stroke="#000" stroke-width="1" fill="none" shape-rendering="crispEdges">
<rect x="219.5" y="197.5" width="469" height="179"/>
<path d="M208 374.5H219"/>
<path d="M208 273.5H219"/>
<path d="M214 344.5H219"/>
<path d="M214 326.5H219"/>
<path d="M214 313.5H219"/>
<path d="M214 303.5H219"/>
<path d="M214 295.5H219"/>
<path d="M214 289.5H219"/>
<path d="M214 283.5H219"/>
<path d="M214 278.5H219"/>
<path d="M214 243.5H219"/>
<path d="M214 225.5H219"/>
<path d="M214 212.5H219"/>
<path d="M214 202.5H219"/>
<path d="M220.5 377V383"/>
<path d="M238.5 377V389"/>
<path d="M256.5 377V383"/>
<path d="M274.5 377V383"/>
<path d="M292.5 377V383"/>
<path d="M310.5 377V383"/>
<path d="M328.5 377V383"/>
<path d="M346.5 377V383"/>
<path d="M364.5 377V383"/>
<path d="M382.5 377V383"/>
<path d="M400.5 377V383"/>
<path d="M418.5 377V383"/>
<path d="M436.5 377V383"/>
<path d="M454.5 377V389"/>
<path d="M472.5 377V383"/>
<path d="M490.5 377V383"/>
<path d="M508.5 377V383"/>
<path d="M526.5 377V383"/>
<path d="M544.5 377V383"/>
<path d="M562.5 377V383"/>
<path d="M580.5 377V383"/>
<path d="M598.5 377V383"/>
<path d="M616.5 377V383"/>
<path d="M634.5 377V383"/>
<path d="M652.5 377V383"/>
<path d="M670.5 377V389"/>
<path d="M688.5 377V383"/>
</g>
<rect x="704" y="198" width="16" height="179" fill="url(#cb)"/>
<g stroke="#000" stroke-width="1" fill="none" shape-rendering="crispEdges">
<path d="M720.5 198V377.5"/>
<path d="M704 377.5H732"/>
<path d="M720 364.5H726"/>
<path d="M720 350.5H732"/>
<path d="M720 337.5H726"/>
<path d="M720 324.5H732"/>
<path d="M720 311.5H726"/>
<path d="M720 297.5H732"/>
<path d="M720 284.5H726"/>
<path d="M720 271.5H732"/>
<path d="M720 258.5H726"/>
<path d="M720 244.5H732"/>
<path d="M720 231.5H726"/>
<path d="M720 218.5H732"/>
<path d="M720 204.5H726"/>
</g>
<text x="736.3" y="386.5">10</text><text x="755.8" y="378.7">-22</text>
<text x="736.3" y="359.9">10</text><text x="755.8" y="352.1">-20</text>
<text x="736.3" y="333.4">10</text><text x="755.8" y="325.6">-18</text>
<text x="736.3" y="306.9">10</text><text x="755.8" y="299.1">-16</text>
<text x="736.3" y="280.3">10</text><text x="755.8" y="272.5">-14</text>
<text x="736.3" y="253.8">10</text><text x="755.8" y="245.9">-12</text>
<text x="736.3" y="227.2">10</text><text x="755.8" y="219.4">-10</text>
<text transform="translate(804.5 288) rotate(-90)" text-anchor="middle">V^2/m^2/Hz</text>
<text x="173.4" y="282.6">10</text><text x="193" y="275">5</text>
<text x="173.4" y="383.8">10</text><text x="193" y="375.6">4</text>
<text transform="translate(161 287.5) rotate(-90)" text-anchor="middle">Hz</text>
<text x="454.3" y="187" text-anchor="middle" xml:space="preserve">RBSP-A/EMFISIS  HFR Spectra Data</text>
<text x="216.7" y="408.7">00:00</text><text x="216.7" y="424.7">2012-12-02</text>
<text x="648.4" y="408.7">00:00</text><text x="648.4" y="424.7">2012-12-03</text>
<text x="295.8" y="413.6">RBSP-A/ECT HOPE</text><text x="610.5" y="413.6" text-anchor="end">e Tperp/Tpar</text>
<g stroke="#000" stroke-width="1" fill="none" shape-rendering="crispEdges">
<rect x="219.5" y="440.5" width="469" height="181"/>
<path d="M208 450.5H219"/>
<path d="M208 475.5H219"/>
<path d="M208 500.5H219"/>
<path d="M208 528.5H219"/>
<path d="M208 561.5H219"/>
<path d="M208 599.5H219"/>
<path d="M214 463.5H219"/>
<path d="M214 487.5H219"/>
<path d="M214 514.5H219"/>
<path d="M214 544.5H219"/>
<path d="M214 580.5H219"/>
<path d="M214 441.5H219"/>
<path d="M220.5 621V627"/>
<path d="M238.5 621V633"/>
<path d="M256.5 621V627"/>
<path d="M274.5 621V627"/>
<path d="M292.5 621V627"/>
<path d="M310.5 621V627"/>
<path d="M328.5 621V627"/>
<path d="M346.5 621V627"/>
<path d="M364.5 621V627"/>
<path d="M382.5 621V627"/>
<path d="M400.5 621V627"/>
<path d="M418.5 621V627"/>
<path d="M436.5 621V627"/>
<path d="M454.5 621V633"/>
<path d="M472.5 621V627"/>
<path d="M490.5 621V627"/>
<path d="M508.5 621V627"/>
<path d="M526.5 621V627"/>
<path d="M544.5 621V627"/>
<path d="M562.5 621V627"/>
<path d="M580.5 621V627"/>
<path d="M598.5 621V627"/>
<path d="M616.5 621V627"/>
<path d="M634.5 621V627"/>
<path d="M652.5 621V627"/>
<path d="M670.5 621V633"/>
<path d="M688.5 621V627"/>
</g>
<text x="203.4" y="457.0" text-anchor="end">2.2</text>
<text x="203.4" y="481.7" text-anchor="end">2.0</text>
<text x="203.4" y="506.0" text-anchor="end">1.8</text>
<text x="203.4" y="535.0" text-anchor="end">1.6</text>
<text x="203.4" y="567.7" text-anchor="end">1.4</text>
<text x="203.4" y="605.1" text-anchor="end">1.2</text>
<text transform="translate(167 533.5) rotate(-90)" text-anchor="middle">e Tperp/Tpar</text>
<text x="260.6" y="653" text-anchor="end">00:00</text>
<text x="476.6" y="653" text-anchor="end">12:00</text>
<text x="692.7" y="653" text-anchor="end">00:00</text>
<text x="260.6" y="673" text-anchor="end">4.225</text>
<text x="476.6" y="673" text-anchor="end">5.756</text>
<text x="692.7" y="673" text-anchor="end">3.179</text>
<text x="260.6" y="693" text-anchor="end">-10.580</text>
<text x="476.6" y="693" text-anchor="end">-1.544</text>
<text x="692.7" y="693" text-anchor="end">-16.190</text>
<text x="260.6" y="713" text-anchor="end">2.247</text>
<text x="476.6" y="713" text-anchor="end">5.398</text>
<text x="692.7" y="713" text-anchor="end">8.125</text>
<text x="260.6" y="733" text-anchor="end">4.373</text>
<text x="476.6" y="733" text-anchor="end">5.760</text>
<text x="692.7" y="733" text-anchor="end">3.447</text>
<text x="167.5" y="673" text-anchor="end">R</text><text x="174.3" y="677.6" text-anchor="end" font-size="9.6" style="stroke-width:0.5px">E</text>
<text x="174.3" y="693" text-anchor="end">MLat</text><text x="174.3" y="713" text-anchor="end">MLT</text><text x="174.3" y="733" text-anchor="end">L</text>
<text x="454.3" y="757" text-anchor="middle">2012-12-01 (336) 23:00 to 2012-12-03 (338) 01:00</text>
</g>
<path d="M219.8,544.6 220.2,518.2 220.5,511.1 220.8,520.1 221.1,506.1 221.5,524.0 221.8,497.4 222.1,517.9 222.5,495.6 222.8,515.4 223.1,502.5 223.5,507.7 223.8,490.6 224.1,514.3 224.4,479.9 224.8,501.3 225.1,486.0 225.4,501.7 225.8,485.8 226.1,502.2 226.4,471.9 226.8,506.2 227.1,463.7 227.4,496.2 227.7,475.0 228.1,486.1 228.4,476.9 228.7,485.4 229.1,477.0 229.4,499.7 229.7,474.2 230.1,482.2 230.4,475.1 230.7,482.0 231.0,471.3 231.4,496.6 231.7,473.5 232.0,491.8 232.4,458.2 232.7,478.0 233.0,462.4 233.4,489.9 233.7,470.7 234.0,500.2 234.3,478.5 234.7,490.6 235.0,472.3 235.3,508.3 235.7,476.4 236.0,501.9 236.3,477.2 236.7,503.0 237.0,484.6 237.3,500.0 237.6,473.6 238.0,498.7 238.3,477.0 238.6,513.6 239.0,489.5 239.3,506.5 239.6,493.7 240.0,512.8 240.3,495.7 240.6,507.9 240.9,500.3 241.3,511.4 241.6,489.0 241.9,517.7 242.3,501.8 242.6,512.0 242.9,499.4 243.3,518.4 243.6,499.7 243.9,520.1 244.2,511.8 244.6,525.6 244.9,505.7 245.2,534.7 245.6,509.9 245.9,531.9 246.2,511.7 246.6,540.5 246.9,515.6 247.2,540.5 247.5,521.7 247.9,538.3 248.2,515.2 248.5,534.3 248.9,527.6 249.2,543.7 249.5,518.9 249.9,538.1 250.2,520.9 250.5,547.3 250.8,529.7 251.2,538.7 251.5,532.4 251.8,542.1 252.2,534.3 252.5,545.3 252.8,535.0 253.2,549.7 253.5,534.5 253.8,550.7 254.1,539.4 254.5,546.1 254.8,538.2 255.1,549.3 255.5,541.4 255.8,549.3 256.1,539.6 256.5,552.2 256.8,542.4 257.1,550.7 257.4,548.0 257.8,559.7 258.1,551.7 258.4,567.3 258.8,556.7 259.1,561.4 259.4,557.1 259.8,563.6 260.1,551.3 260.4,563.9 260.7,551.7 261.1,565.9 261.4,553.1 261.7,561.7 262.1,555.9 262.4,564.7 262.7,554.2 263.1,565.4 263.4,557.5 263.7,561.7 264.0,557.7 264.4,562.1 264.7,555.9 265.0,560.8 265.4,555.6 265.7,564.5 266.0,555.1 266.4,563.4 266.7,557.0 267.0,563.0 267.3,555.7 267.7,568.3 268.0,559.8 268.3,564.8 268.7,555.8 269.0,570.8 269.3,562.9 269.7,567.0 270.0,564.3 270.3,573.1 270.6,565.8 271.0,570.7 271.3,565.6 271.6,570.6 272.0,564.7 272.3,572.1 272.6,566.8 273.0,571.2 273.3,567.6 273.6,574.2 273.9,569.2 274.3,573.3 274.6,569.4 274.9,574.8 275.3,568.3 275.6,575.2 275.9,572.0 276.3,579.1 276.6,569.8 276.9,574.6 277.2,572.2 277.6,578.0 277.9,569.1 278.2,575.9 278.6,566.6 278.9,576.1 279.2,569.6 279.6,577.9 279.9,569.9 280.2,579.8 280.5,567.8 280.9,583.2 281.2,565.6 281.5,583.1 281.9,565.3 282.2,584.0 282.5,569.5 282.9,580.2 283.2,568.7 283.5,578.0 283.8,568.7 284.2,574.9 284.5,569.0 284.8,576.8 285.2,566.8 285.5,575.1 285.8,570.3 286.2,581.2 286.5,567.5 286.8,579.7 287.1,563.7 287.5,574.3 287.8,565.4 288.1,575.8 288.5,564.9 288.8,576.1 289.1,566.9 289.5,574.0 289.8,565.9 290.1,576.6 290.4,570.1 290.8,577.3 291.1,570.0 291.4,576.8 291.8,570.5 292.1,577.5 292.4,571.2 292.8,575.5 293.1,563.5 293.4,579.7 293.7,568.8 294.1,575.9 294.4,567.4 294.7,575.5 295.1,571.0 295.4,575.0 295.7,565.7 296.1,571.1 296.4,560.9 296.7,570.6 297.0,557.5 297.4,567.8 297.7,554.7 298.0,567.7 298.4,550.9 298.7,568.0 299.0,555.6 299.4,568.0 299.7,557.2 300.0,572.4 300.3,552.4 300.7,563.3 301.0,549.3 301.3,563.1 301.7,547.4 302.0,555.9 302.3,540.6 302.7,554.8 303.0,549.1 303.3,562.4 303.6,548.5 304.0,563.1 304.3,547.7 304.6,557.6 305.0,548.1 305.3,563.2 305.6,539.2 306.0,551.9 306.3,545.1 306.6,561.1 306.9,547.8 307.3,552.4 307.6,548.4 307.9,553.3 308.3,544.0 308.6,553.8 308.9,548.7 309.3,564.4 309.6,549.7 309.9,558.2 310.2,553.3 310.6,566.9 310.9,551.1 311.2,559.5 311.6,553.6 311.9,565.1 312.2,550.6 312.6,568.6 312.9,556.8 313.2,567.1 313.5,555.1 313.9,571.8 314.2,559.2 314.5,570.7 314.9,560.2 315.2,572.3 315.5,557.8 315.9,569.7 316.2,553.4 316.5,571.9 316.8,553.0 317.2,571.2 317.5,551.2 317.8,559.1 318.2,545.5 318.5,559.4 318.8,543.3 319.2,551.8 319.5,540.3 319.8,550.0 320.1,533.7 320.5,550.8 320.8,531.0 321.1,546.5 321.5,533.5 321.8,540.9 322.1,528.3 322.5,541.4 322.8,529.5 323.1,539.8 323.4,527.9 323.8,535.3 324.1,522.7 324.4,530.7 324.8,520.4 325.1,530.2 325.4,516.4 325.8,526.4 326.1,509.3 326.4,523.4 326.7,504.6 327.1,523.7 327.4,508.7 327.7,524.0 328.1,496.5 328.4,510.4 328.7,498.4 329.1,524.3 329.4,501.7 329.7,519.7 330.0,492.4 330.4,518.2 330.7,498.3 331.0,514.3 331.4,501.5 331.7,518.8 332.0,510.5 332.4,519.2 332.7,508.8 333.0,516.1 333.3,508.9 333.7,509.4 334.0,488.7 334.3,497.6 334.7,468.2 335.0,496.1 335.3,474.6 335.7,485.4 336.0,471.8 336.3,491.1 336.6,460.0 337.0,488.3 337.3,467.6 337.6,494.7 338.0,478.1 338.3,503.7 338.6,480.6 339.0,500.1 339.3,479.0 339.6,498.8 339.9,472.5 340.3,496.2 340.6,473.7 340.9,505.1 341.3,475.8 341.6,500.9 341.9,472.5 342.3,494.1 342.6,482.1 342.9,500.4 343.2,476.9 343.6,504.7 343.9,485.1 344.2,496.2 344.6,474.3 344.9,493.8 345.2,479.1 345.6,497.6 345.9,473.0 346.2,495.3 346.5,475.4 346.9,489.8 347.2,471.2 347.5,487.4 347.9,470.6 348.2,495.8 348.5,481.3 348.9,491.2 349.2,484.6 349.5,493.5 349.8,468.8 350.2,510.7 350.5,481.3 350.8,500.4 351.2,481.3 351.5,513.0 351.8,487.4 352.2,510.1 352.5,482.5 352.8,512.1 353.1,493.4 353.5,525.0 353.8,481.0 354.1,510.8 354.5,501.0 354.8,518.5 355.1,485.4 355.5,530.0 355.8,510.8 356.1,522.5 356.4,491.2 356.8,527.1 357.1,516.3 357.4,536.6 357.8,513.8 358.1,545.7 358.4,518.5 358.8,545.7 359.1,521.9 359.4,543.8 359.7,535.2 360.1,562.9 360.7,579.6M373.1,550.1 373.4,545.1 373.8,470.6 374.1,523.8 374.4,484.7 374.8,507.9 375.1,488.9 375.4,506.6 375.7,484.3 376.1,491.4 376.4,483.4 376.7,496.4 377.1,480.5 377.4,492.0 377.7,482.3 378.1,498.2 378.4,472.0 378.7,495.5 379.0,471.6 379.4,491.9 379.7,483.1 380.0,506.6 380.4,476.5 380.7,505.3 381.0,470.0 381.4,497.2 381.7,482.4 382.0,506.8 382.3,474.2 382.7,504.7 383.0,474.1 383.3,502.3 383.7,464.3 384.0,489.1 384.3,475.7 384.7,486.7 385.0,464.6 385.3,488.5 385.6,478.4 386.0,489.8 386.3,473.6 386.6,488.5 387.0,455.1 387.3,482.8 387.6,467.1 388.0,486.9 388.3,456.4 388.6,495.3 388.9,463.1 389.3,476.9 389.6,467.8 389.9,480.2 390.3,465.6 390.6,487.5 390.9,483.8 391.3,493.8 391.6,484.5 391.9,503.6 392.2,482.4 392.6,504.2 392.9,498.3 393.2,513.3 393.6,496.8 393.9,520.8 394.2,488.0 394.6,497.3 394.9,473.3 395.2,497.6 395.5,460.1 395.9,477.2 396.2,462.3 396.5,478.8 396.9,466.7 397.2,483.6 397.5,461.4 397.9,479.4 398.2,461.1 398.5,485.9 398.8,469.3 399.2,488.0 399.5,466.3 399.8,486.5 400.2,476.6 400.5,494.0 400.8,474.1 401.2,497.8 401.5,476.4 401.8,496.8 402.1,480.6 402.5,502.1 402.8,484.9 403.1,507.3 403.5,489.0 403.8,507.7 404.1,490.6 404.5,499.7 404.8,492.7 405.1,499.0 405.4,487.8 405.8,500.4 406.1,489.8 406.4,496.9 406.8,486.1 407.1,499.4 407.4,487.1 407.8,496.7 408.1,489.5 408.4,496.2 408.7,488.4 409.1,495.0 409.4,485.4 409.7,490.7 410.1,484.2 410.4,497.6 410.7,481.2 411.1,487.2 411.4,480.6 411.7,491.4 412.0,479.4 412.4,483.4 412.7,471.8 413.0,488.3 413.4,466.0 413.7,484.7 414.0,475.2 414.4,488.7 414.7,471.6 415.0,494.0 415.3,479.1 415.7,491.3 416.0,474.8 416.3,488.9 416.7,478.9 417.0,486.5 417.3,478.4 417.7,493.1 418.0,482.5 418.3,486.5 418.6,479.8 419.0,488.9 419.3,478.0 419.6,490.9 420.0,483.7 420.3,491.1 420.6,482.5 421.0,497.3 421.3,482.9 421.6,491.9 421.9,483.0 422.3,494.4 422.6,487.6 422.9,499.5 423.3,488.4 423.6,498.7 423.9,491.8 424.3,505.2 424.6,486.7 424.9,500.6 425.2,486.4 425.6,499.3 425.9,495.5 426.2,504.0 426.6,489.0 426.9,504.2 427.2,492.8 427.6,505.5 427.9,495.9 428.2,512.0 428.5,492.5 428.9,504.2 429.2,489.4 429.5,513.9 429.9,497.6 430.2,504.8 430.5,492.7 430.9,506.9 431.2,500.9 431.5,508.5 431.8,500.0 432.2,505.9 432.5,491.5 432.8,507.8 433.2,499.5 433.5,506.6 433.8,502.6 434.2,508.8 434.5,497.0 434.8,506.8 435.1,496.6 435.5,511.4 435.8,495.1 436.1,509.8 436.5,496.1 436.8,517.3 437.1,496.3 437.5,519.2 437.8,491.1 438.1,514.8 438.4,492.3 438.8,516.0 439.1,488.3 439.4,514.5 439.8,493.3 440.1,505.6 440.4,495.9 440.8,506.7 441.1,499.4 441.4,508.7 441.7,499.5 442.1,510.4 442.4,495.7 442.7,508.0 443.1,495.0 443.4,506.0 443.7,498.1 444.1,505.9 444.4,486.3 444.7,504.7 445.0,490.7 445.4,506.2 445.7,498.3 446.0,511.6 446.4,484.9 446.7,510.6 447.0,493.0 447.4,507.5 447.7,495.3 448.0,509.2 448.3,493.8 448.7,512.6 449.0,493.3 449.3,505.2 449.7,496.9 450.0,515.9 450.3,489.5 450.7,508.5 451.0,493.7 451.3,506.1 451.6,500.8 452.0,509.9 452.3,498.9 452.6,510.9 453.0,497.8 453.3,509.6 453.6,497.0 454.0,507.2 454.3,487.6 454.6,505.8 454.9,493.7 455.3,503.4 455.6,491.0 455.9,511.4 456.3,480.8 456.6,500.6 456.9,491.5 457.3,503.9 457.6,484.6 457.9,504.6 458.2,474.0 458.6,506.4 458.9,471.8 459.2,492.3 459.6,469.5 459.9,497.8 460.2,478.5 460.6,497.5 460.9,487.4 461.2,500.6 461.5,484.9 461.9,500.1 462.2,492.6 462.5,504.7 462.9,497.0 463.2,510.8 463.5,493.2 463.9,511.9 464.2,500.7 464.5,507.5 464.8,502.1 465.2,512.7 465.5,497.4 465.8,519.5 466.2,503.3 466.5,519.4 466.8,497.7 467.2,513.5 467.5,501.8 467.8,521.2 468.1,508.2 468.5,517.5 468.8,507.2 469.1,519.2 469.5,498.0 469.8,522.4 470.1,510.0 470.5,528.3 470.8,503.5 471.1,525.7 471.4,509.7 471.8,529.3 472.1,495.2 472.4,528.2 472.8,507.7 473.1,517.0 473.4,495.5 473.8,518.3 474.1,504.0 474.4,526.1 474.7,495.2 475.1,512.9 475.4,494.9 475.7,516.9 476.1,483.0 476.4,506.0 476.7,487.6 477.1,509.5 477.4,490.9 477.7,519.9 478.0,492.8 478.4,508.2 478.7,494.7 479.0,506.3 479.4,494.2 479.7,506.1 480.0,491.1 480.4,505.6 480.7,487.3 481.0,505.8 481.3,491.5 481.7,507.6 482.0,488.2 482.3,512.5 482.7,491.9 483.0,519.7 483.3,496.8 483.7,507.1 484.0,496.4 484.3,519.4 484.6,497.6 485.0,519.5 485.3,512.8 485.6,524.9 486.0,517.4 486.3,528.3 486.6,524.4 487.0,544.3 487.3,522.9 487.6,551.5 487.9,527.0 488.3,556.9 488.6,513.3 488.9,535.4 489.3,521.2 489.6,527.4 489.9,520.1 490.3,524.8 490.6,514.9 490.9,530.0 491.2,509.6 491.6,528.5 491.9,507.9 492.2,531.5 492.6,510.5 492.9,517.5 493.2,506.8 493.6,515.6 493.9,488.0 494.2,514.8 494.5,491.2 494.9,516.5 495.2,498.7 495.5,513.1 495.9,483.6 496.2,523.4 496.5,494.3 496.9,518.1 497.2,491.0 497.5,500.6 497.8,486.0 498.2,516.3 498.5,484.3 498.8,507.4 499.2,488.6 499.5,501.7 499.8,471.9 500.2,497.9 500.5,475.7 500.8,506.3 501.1,477.6 501.5,496.8 501.8,483.3 502.1,499.8 502.5,490.5 502.8,513.3 503.1,485.1 503.5,502.4 503.8,480.8 504.1,508.9 504.4,482.6 504.8,509.9 505.1,491.8 505.4,497.4 505.8,490.3 506.1,499.8 506.4,488.4 506.8,502.4 507.1,483.4 507.4,497.3 507.7,480.2 508.1,501.6 508.4,484.4 508.7,495.8 509.1,468.3 509.4,488.2 509.7,463.4 510.1,484.9 510.4,464.0 510.7,488.3 511.0,463.4 511.4,489.9 511.7,476.3 512.0,506.7 512.4,489.2 512.7,507.6 513.0,490.9 513.4,508.9 513.7,490.2 514.0,512.8 514.3,487.5 514.7,516.3 515.0,504.8 515.3,514.3 515.7,493.5 516.0,529.4 516.3,498.2 516.7,538.6 517.0,510.9 517.3,534.0 517.6,518.4 518.0,530.8 518.3,521.9 518.6,541.0 519.0,522.7 519.3,550.6 519.6,520.4 520.0,544.5 520.3,524.0 520.6,554.2 520.9,540.8 521.3,549.5 521.6,545.2 521.9,557.1 522.3,563.2M534.3,577.4 534.7,547.3 535.0,506.8 535.3,563.1 535.6,509.0 536.0,531.1 536.3,505.9 536.6,536.8 537.0,492.8 537.3,518.6 537.6,490.9 538.0,528.4 538.3,488.5 538.6,536.0 538.9,496.9 539.3,538.3 539.6,498.5 539.9,518.2 540.3,502.8 540.6,515.9 540.9,493.5 541.3,514.4 541.6,492.6 541.9,529.6 542.2,481.6 542.6,503.4 542.9,472.9 543.2,513.5 543.6,474.4 543.9,500.9 544.2,482.8 544.6,503.1 544.9,468.8 545.2,496.8 545.5,483.9 545.9,497.1 546.2,482.2 546.5,517.3 546.9,476.3 547.2,504.4 547.5,484.8 547.9,505.8 548.2,466.3 548.5,495.1 548.8,479.0 549.2,490.4 549.5,462.0 549.8,493.1 550.2,480.8 550.5,494.1 550.8,482.7 551.2,507.5 551.5,468.3 551.8,509.4 552.1,481.6 552.5,503.8 552.8,487.1 553.1,510.1 553.5,501.0 553.8,526.3 554.1,505.8 554.5,524.3 554.8,505.8 555.1,530.2 555.4,515.1 555.8,540.3 556.1,517.9 556.4,535.4 556.8,514.2 557.1,538.8 557.4,522.2 557.8,547.0 558.1,519.2 558.4,538.8 558.7,519.4 559.1,540.9 559.4,515.0 559.7,555.1 560.1,520.0 560.4,543.6 560.7,524.7 561.1,554.0 561.4,533.0 561.7,549.2 562.0,527.3 562.4,559.4 562.7,526.6 563.0,567.7 563.4,544.3 563.7,565.5 564.0,527.5 564.4,556.8 564.7,550.2 565.0,579.6 565.3,531.3 565.7,575.8 566.0,545.4 566.3,573.8 566.7,542.2 567.0,590.0 567.3,546.1 567.7,590.3 568.0,565.0 568.3,595.3 568.6,558.1 569.0,584.9 569.3,551.3 569.6,579.8 570.0,569.6 570.3,598.7 570.6,571.4 571.0,603.0 571.3,572.4 571.6,604.0 571.9,569.1 572.3,601.2 572.6,562.8 572.9,590.4 573.3,566.0 573.6,600.7 573.9,576.1 574.3,592.2 574.6,579.6 574.9,597.7 575.2,567.1 575.6,601.0 575.9,567.9 576.2,603.8 576.6,576.9 576.9,592.1 577.2,570.0 577.6,599.7 577.9,578.3 578.2,601.9 578.5,580.4 578.9,590.5 579.2,575.1 579.5,590.4 579.9,578.0 580.2,594.8 580.5,576.2 580.9,605.5 581.2,578.9 581.5,597.2 581.8,574.3 582.2,606.1 582.5,571.4 582.8,593.6 583.2,585.6 583.5,594.8 583.8,575.9 584.2,595.1 584.5,584.7 584.8,594.0 585.1,578.2 585.5,596.1 585.8,572.7 586.1,599.3 586.5,575.8 586.8,602.7 587.1,585.1 587.5,598.7 587.8,578.4 588.1,592.8 588.4,576.8 588.8,594.1 589.1,587.3 589.4,599.0 589.8,585.9 590.1,602.7 590.4,572.8 590.8,603.1 591.1,576.0 591.4,592.0 591.7,578.0 592.1,604.8 592.4,573.0 592.7,601.1 593.1,578.4 593.4,603.2 593.7,587.7 594.1,601.6 594.4,589.2 594.7,596.7 595.0,589.4 595.4,602.5 595.7,588.2 596.0,600.9 596.4,591.5 596.7,603.8 597.0,587.3 597.4,612.1 597.7,592.7 598.0,608.0 598.3,588.4 598.7,604.7 599.0,589.8 599.3,607.5 599.7,588.8 600.0,603.2 600.3,587.6 600.7,608.2 601.0,590.0 601.3,606.3 601.6,578.4 602.0,594.7 602.3,585.2 602.6,597.3 603.0,584.3 603.3,599.7 603.6,587.9 604.0,593.9 604.3,582.4 604.6,596.4 604.9,579.9 605.3,590.9 605.6,575.6 605.9,596.9 606.3,582.6 606.6,594.0 606.9,578.5 607.3,593.2 607.6,580.5 607.9,591.3 608.2,578.2 608.6,590.3 608.9,577.5 609.2,587.1 609.6,569.7 609.9,586.2 610.2,571.8 610.6,593.7 610.9,580.1 611.2,588.7 611.5,577.2 611.9,593.7 612.2,577.3 612.5,593.6 612.9,571.7 613.2,584.5 613.5,575.0 613.9,594.8 614.2,574.0 614.5,585.0 614.8,578.0 615.2,587.6 615.5,574.8 615.8,588.0 616.2,576.4 616.5,585.1 616.8,565.8 617.2,593.1 617.5,574.1 617.8,584.0 618.1,571.4 618.5,586.9 618.8,574.1 619.1,586.2 619.5,565.3 619.8,586.3 620.1,572.9 620.5,581.8 620.8,568.5 621.1,580.9 621.4,568.0 621.8,584.2 622.1,572.1 622.4,586.6 622.8,570.3 623.1,577.8 623.4,564.4 623.8,579.5 624.1,570.9 624.4,579.3 624.7,566.9 625.1,578.5 625.4,566.6 625.7,579.3 626.1,559.8 626.4,579.3 626.7,565.5 627.1,572.5 627.4,564.2 627.7,573.3 628.0,562.4 628.4,571.2 628.7,561.2 629.0,571.3 629.4,560.8 629.7,569.1 630.0,555.6 630.4,568.6 630.7,561.7 631.0,565.5 631.3,560.2 631.7,573.3 632.0,553.2 632.3,562.0 632.7,550.0 633.0,569.8 633.3,549.0 633.7,559.3 634.0,548.0 634.3,558.7 634.6,543.4 635.0,558.5 635.3,546.9 635.6,563.7 636.0,543.4 636.3,555.8 636.6,540.6 637.0,554.6 637.3,540.1 637.6,560.2 637.9,519.2 638.3,550.3 638.6,514.8 638.9,542.0 639.3,518.2 639.6,543.6 639.9,533.5 640.3,552.4 640.6,531.2 640.9,552.9 641.2,539.8 641.6,560.4 641.9,552.7 642.2,563.0 642.6,547.1 642.9,575.6 643.2,558.9 643.6,573.5 643.9,550.5 644.2,574.2 644.5,558.7 644.9,584.2 645.2,554.6 645.5,590.4 645.9,563.4 646.2,593.1 646.5,547.8 646.9,577.0 647.2,548.8 647.5,589.5 647.8,568.0 648.2,575.9 648.5,562.2 648.8,582.0 649.2,566.1 649.5,586.5 649.8,562.0 650.2,590.8 650.5,559.2 650.8,580.6 651.1,565.6 651.5,576.0 651.8,559.1 652.1,583.9 652.5,566.5 652.8,579.6 653.1,565.7 653.5,575.3 653.8,561.0 654.1,578.6 654.4,562.9 654.8,579.8 655.1,557.5 655.4,577.3 655.8,560.5 656.1,568.6 656.4,555.4 656.8,565.0 657.1,534.0 657.4,576.0 657.7,538.9 658.1,573.4 658.4,538.6 658.7,552.9 659.1,529.3 659.4,556.0 659.7,533.1 660.1,551.8 660.4,521.4 660.7,549.0 661.0,519.5 661.4,542.8 661.7,520.6 662.0,553.9 662.4,524.1 662.7,543.4 663.0,512.3 663.4,546.2 663.7,524.6 664.0,545.4 664.3,503.5 664.7,528.4 665.0,504.8 665.3,544.9 665.7,499.6 666.0,527.1 666.3,505.4 666.7,529.7 667.0,507.1 667.3,529.6 667.6,486.6 668.0,521.4 668.3,491.9 668.6,530.8 669.0,507.0 669.3,531.6 669.6,481.6 670.0,546.9 670.3,500.9 670.6,542.1 670.9,514.1 671.3,524.0 671.6,494.1 671.9,526.7 672.3,498.5 672.6,521.5 672.9,505.5 673.3,519.3 673.6,501.8 673.9,534.6 674.2,505.7 674.6,528.5 674.9,505.1 675.2,525.5 675.6,495.2 675.9,523.0 676.2,490.4 676.6,530.9 676.9,512.5 677.2,541.0 677.5,506.8 677.9,524.5 678.2,492.7 678.5,528.6 678.9,506.7 679.2,521.8 679.5,500.6 679.9,521.7 680.2,506.6 680.5,526.2 680.8,501.6 681.2,526.0 681.5,508.6 681.8,533.8 682.2,531.7 682.5,547.2 682.8,534.9 683.2,563.3 683.5,555.3 684.1,585.0M670.3 490V596M389.5 449V480M396.2 449V482M488 470V559M234.4 455V470" fill="none" stroke="#000" stroke-width="1.1" stroke-linejoin="round"/>
</svg>
</div></div>
<div id="status">plot_1 selected</div>
<div id="dlg" style="position:absolute;left:346px;top:358px;width:244px;height:88px;border:1px solid #8e8e8e;background:#d6d6d6;border-radius:4px 4px 0 0;box-shadow:0 0 0 0 #000;">
 <svg class="abs" style="left:0;top:0" width="244" height="25"><path d="M12.5 10.5h8l-4 5z" fill="#9a9a9a"/><path d="M221.5 9.5l7 7M228.5 9.5l-7 7" stroke="#9a9a9a" stroke-width="2" fill="none"/></svg>
 <div class="abs" style="left:0;top:6px;width:244px;text-align:center;font:bold 13.4px 'Liberation Sans',sans-serif;color:#7b7b7b;">Progress Monitor</div>
 <div class="abs" style="left:2px;top:25px;width:240px;height:62px;background:#fdfdfd;"></div>
 <div class="abs" style="left:0;top:24px;width:244px;text-align:center;font:15.6px 'DejaVu Sans',sans-serif;color:#2b2436;-webkit-text-stroke:0.35px #2b2436;">running batch</div>
 <div class="abs" style="left:0;top:41px;width:244px;text-align:center;font:9.25px 'DejaVu Sans',sans-serif;color:#222;white-space:pre;-webkit-text-stroke:0.3px #222;">write /hom...walk3/product_20121222_12.png</div>
 <div class="abs" style="left:2px;top:53px;width:219px;height:17px;border:1px solid #6382bf;background:#eeeeee;"><div style="width:153px;height:17px;background:#a3b8cc"></div></div>
 <div class="abs" style="left:223px;top:53px;width:17px;height:17px;border:1px solid #9aaabb;background:linear-gradient(#e8eff7,#fff 40%,#c4d6e8);">
  <svg width="17" height="17"><rect x="2" y="2" width="13" height="13" rx="3" fill="#e8443e" stroke="#c03838"/><path d="M5.5 5.5l6 6M11.5 5.5l-6 6" stroke="#fff" stroke-width="2"/></svg>
 </div>
 <div class="abs" style="left:0;top:73px;width:244px;text-align:center;font:bold 11.75px 'DejaVu Sans',sans-serif;color:#2b2436;white-space:pre;">44/62 (48.0/min, eta 23.8 s)</div>
</div>
</body></html>
